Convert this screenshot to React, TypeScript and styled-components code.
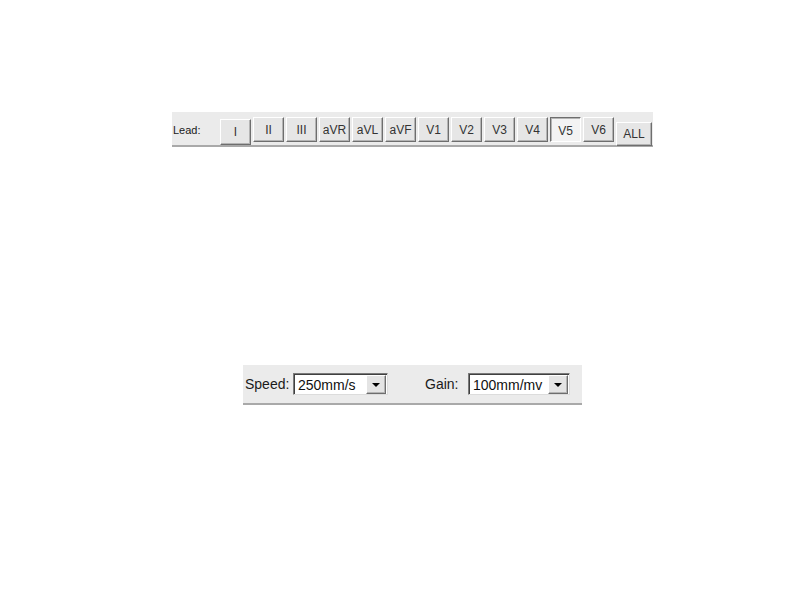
import styled, { createGlobalStyle, css } from "styled-components";

const GlobalStyle = createGlobalStyle`
  html, body {
    margin: 0;
    padding: 0;
    background: #ffffff;
  }
  body {
    font-family: "Liberation Sans", Arial, sans-serif;
  }
`;

const leads = ["I", "II", "III", "aVR", "aVL", "aVF", "V1", "V2", "V3", "V4", "V5", "V6"];

const App = () => {
  return (
    <Page>
      <GlobalStyle />
      <LeadBar>
        <LeadLabel>Lead:</LeadLabel>
        <ButtonRow>
          {leads.map((lead) => (
            <LeadButton
              key={lead}
              $pressed={lead === "V5"}
              $drop={lead === "I" ? 2 : 0}
              $tall={lead === "I"}
            >
              {lead}
            </LeadButton>
          ))}
          <LeadButton $wide $drop={5}>
            ALL
          </LeadButton>
        </ButtonRow>
      </LeadBar>

      <SettingsBar>
        <FieldLabel $width={48}>Speed:</FieldLabel>
        <Combo $width={95}>
          <ComboText>250mm/s</ComboText>
          <DropButton>
            <Arrow />
          </DropButton>
        </Combo>
        <FieldLabel $width={43} $gap={37}>
          Gain:
        </FieldLabel>
        <Combo $width={102}>
          <ComboText>100mm/mv</ComboText>
          <DropButton>
            <Arrow />
          </DropButton>
        </Combo>
      </SettingsBar>
    </Page>
  );
};

const Page = styled.div`
  width: 794px;
  height: 595px;
  padding-top: 112px;
  box-sizing: border-box;
  background: #ffffff;
  display: flex;
  flex-direction: column;
  align-items: flex-start;
`;

const LeadBar = styled.div`
  margin-left: 172px;
  width: 481px;
  height: 33px;
  background: #ebebeb;
  border-bottom: 2px solid #a9a9a9;
  display: flex;
  align-items: flex-start;
`;

const LeadLabel = styled.span`
  width: 48px;
  padding-left: 1px;
  box-sizing: border-box;
  margin-top: 12px;
  font-size: 11px;
  color: #1a1a1a;
`;

const ButtonRow = styled.div`
  display: flex;
  align-items: flex-start;
  gap: 2px;
  padding-top: 5px;
`;

const LeadButton = styled.div<{
  $pressed?: boolean;
  $drop?: number;
  $tall?: boolean;
  $wide?: boolean;
}>`
  width: ${(p) => (p.$wide ? 36 : 31)}px;
  height: ${(p) => (p.$tall ? 26 : p.$wide ? 24 : 25)}px;
  margin-top: ${(p) => p.$drop ?? 0}px;
  box-sizing: border-box;
  display: flex;
  align-items: center;
  justify-content: center;
  font-size: 12px;
  color: #333333;
  background: #e6e6e6;
  border: 1px solid;
  border-color: #ffffff #6e6e6e #6e6e6e #ffffff;
  box-shadow: inset -1px -1px 0 #b4b4b4;
  ${(p) =>
    p.$pressed &&
    css`
      background: #f3f3f3;
      border-color: #6e6e6e #ffffff #ffffff #6e6e6e;
      box-shadow: inset 1px 1px 0 #b4b4b4;
      padding-top: 2px;
    `}
`;

const SettingsBar = styled.div`
  margin-top: 218px;
  margin-left: 243px;
  width: 337px;
  height: 38px;
  padding-left: 2px;
  box-sizing: content-box;
  background: #ebebeb;
  border-bottom: 2px solid #a9a9a9;
  display: flex;
  align-items: center;
`;

const FieldLabel = styled.span<{ $width: number; $gap?: number }>`
  width: ${(p) => p.$width}px;
  margin-left: ${(p) => p.$gap ?? 0}px;
  font-size: 14px;
  color: #1a1a1a;
`;

const Combo = styled.div<{ $width: number }>`
  width: ${(p) => p.$width}px;
  height: 22px;
  box-sizing: border-box;
  background: #ffffff;
  border: 1px solid;
  border-color: #7a7a7a #dcdcdc #dcdcdc #7a7a7a;
  box-shadow: inset 1px 1px 0 #404040;
  display: flex;
  align-items: center;
  padding: 1px 1px 0 4px;
`;

const ComboText = styled.span`
  flex: 1;
  overflow: hidden;
  white-space: nowrap;
  font-size: 14px;
  color: #111111;
`;

const DropButton = styled.div`
  width: 20px;
  height: 19px;
  box-sizing: border-box;
  background: #e4e4e4;
  border: 1px solid;
  border-color: #ffffff #6e6e6e #6e6e6e #ffffff;
  box-shadow: inset -1px -1px 0 #b4b4b4;
  display: flex;
  align-items: center;
  justify-content: center;
`;

const Arrow = styled.span`
  width: 0;
  height: 0;
  border-left: 4px solid transparent;
  border-right: 4px solid transparent;
  border-top: 4px solid #000000;
`;

export default App;
